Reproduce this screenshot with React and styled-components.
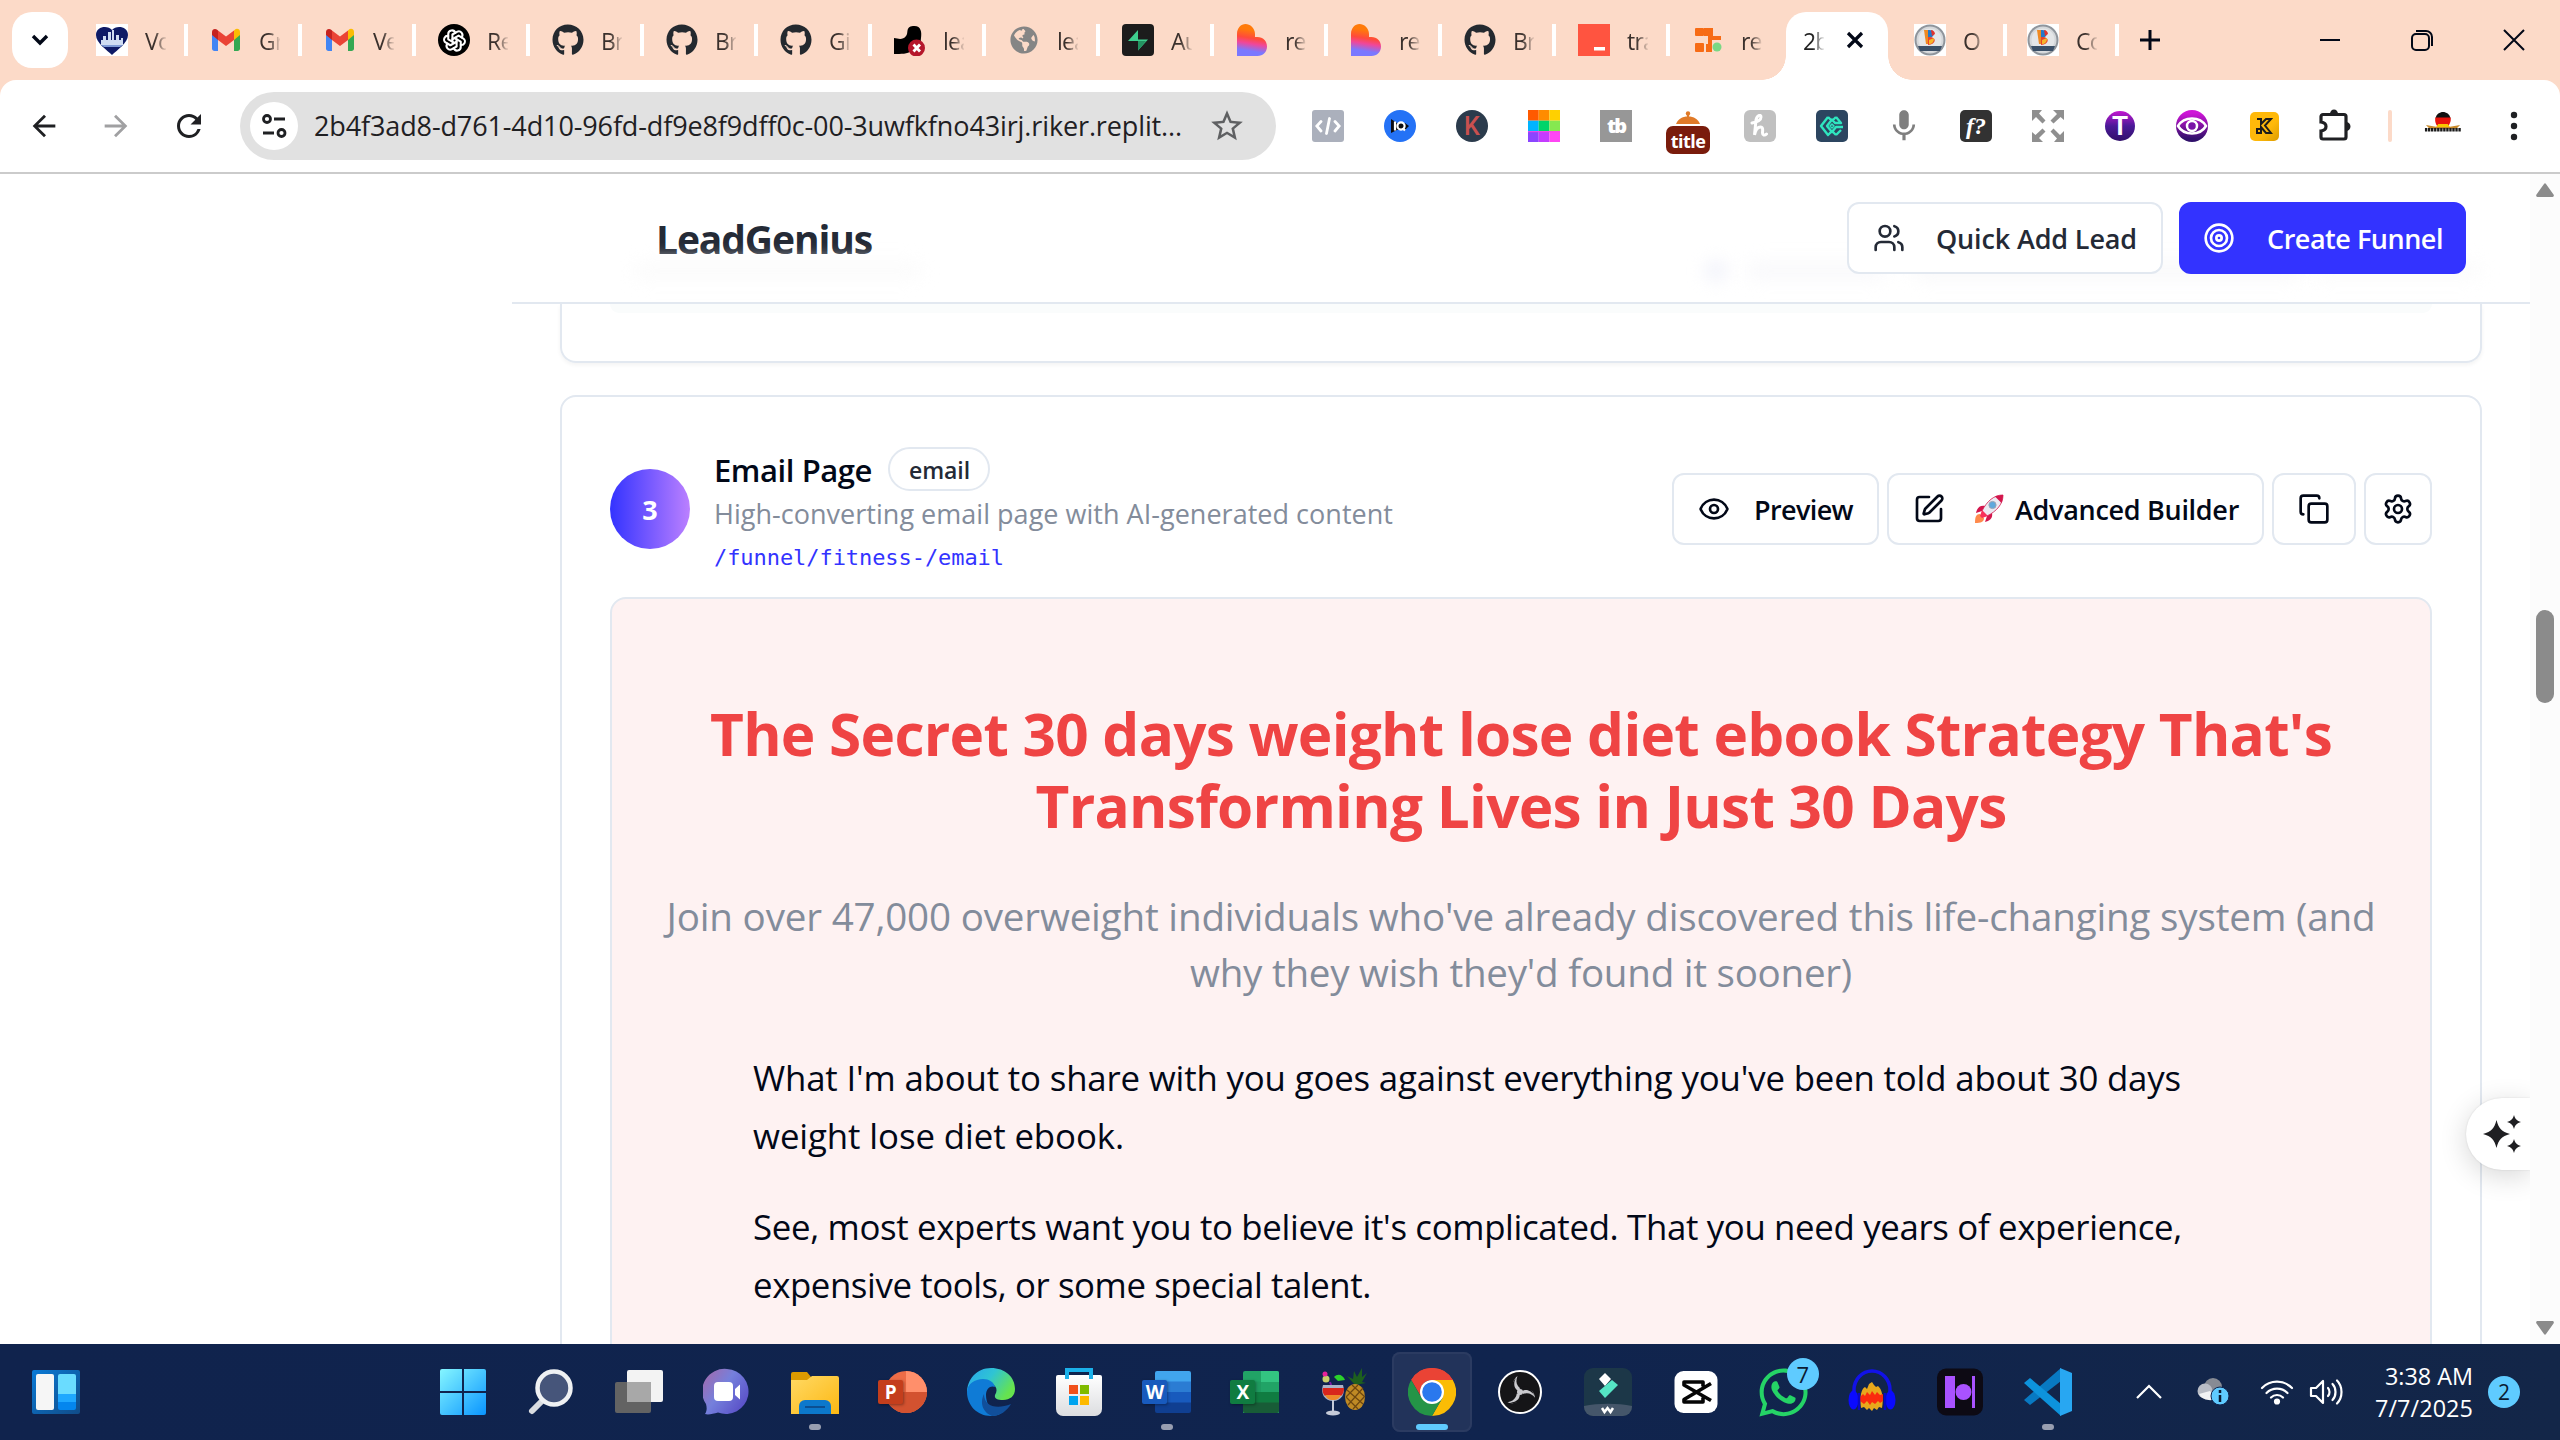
import React, { useLayoutEffect, useRef } from "react";
import styled, { createGlobalStyle, css } from "styled-components";
import { Users, Target, Eye, SquarePen, Copy, Settings } from "lucide-react";
import { FaGithub, FaWhatsapp, FaGlobeAmericas } from "react-icons/fa";
import { TbBrandOpenai } from "react-icons/tb";
import {
  MdArrowBack,
  MdArrowForward,
  MdRefresh,
  MdStarBorder,
  MdMic,
} from "react-icons/md";

const UI = `"Open Sans", "Noto Sans", sans-serif`;
const INK = "#020817";
const LINE = "#e2e8f0";
const PRIMARY = "#3333ff";

const Global = createGlobalStyle`
  *, *::before, *::after { box-sizing: border-box; }
  html, body { margin: 0; padding: 0; background: #fff; overflow: hidden; }
  body { font-family: ${UI}; color: ${INK}; }
  svg { display: block; flex: none; }
`;

/* ---------- text that tracks itself to a given measure ---------- */

const Measured = styled.span`
  display: block;
  width: max-content;
  white-space: nowrap;
`;

function Fit({ width, children }) {
  const ref = useRef(null);
  useLayoutEffect(() => {
    const el = ref.current;
    el.style.letterSpacing = "0px";
    const natural = el.getBoundingClientRect().width;
    el.style.letterSpacing = `${(width - natural) / children.length}px`;
  }, [width, children]);
  return <Measured ref={ref}>{children}</Measured>;
}

/* ---------- window frame ---------- */

const Screen = styled.div`
  width: 2560px;
  height: 1440px;
  display: flex;
  flex-direction: column;
  overflow: hidden;
  background: #fff;
`;

const TabStrip = styled.div`
  flex: none;
  height: 80px;
  display: flex;
  align-items: center;
  padding-left: 12px;
  background: #fcdac8;
`;

const TabSearch = styled.div`
  width: 56px;
  height: 56px;
  border-radius: 20px;
  background: #fff;
  display: flex;
  align-items: center;
  justify-content: center;
  margin-right: 6px;
`;

const Tab = styled.div`
  width: ${(p) => p.$w || 114}px;
  height: 32px;
  display: flex;
  align-items: center;
  padding-left: ${(p) => p.$pl || 22}px;
  border-right: ${(p) => (p.$bare ? "4px solid transparent" : "4px solid #fff")};
`;

const TabLabel = styled.div`
  width: 21px;
  margin-left: 17px;
  padding-top: 2px;
  overflow: hidden;
  white-space: nowrap;
  font-size: 23px;
  line-height: 32px;
  letter-spacing: -0.8px;
  color: #3a302c;
  mask-image: linear-gradient(90deg, #000 45%, transparent 105%);
`;

const ActiveTab = styled.div`
  width: 102px;
  margin: 0 3px 0 2px;
  height: 68px;
  align-self: flex-end;
  background: #fff;
  border-radius: 20px 20px 0 0;
  display: flex;
  align-items: center;
  padding: 0 0 12px 17px;
  position: relative;
  &::before,
  &::after {
    content: "";
    position: absolute;
    bottom: 0;
    width: 24px;
    height: 24px;
  }
  &::before {
    left: -24px;
    background: radial-gradient(circle at 0 0, transparent 23.5px, #fff 24px);
  }
  &::after {
    right: -24px;
    background: radial-gradient(circle at 100% 0, transparent 23.5px, #fff 24px);
  }
`;

const ActiveLabel = styled(TabLabel)`
  margin: 0 22px 0 0;
  color: #1f1f1f;
`;

const WindowControls = styled.div`
  margin-left: auto;
  display: flex;
  align-items: center;
  gap: 68px;
  padding-right: 34px;
`;

const NewTab = styled.div`
  margin-left: 20px;
`;

const ToolbarBack = styled.div`
  flex: none;
  background: #fcdac8;
`;

const Toolbar = styled.div`
  height: 94px;
  border-bottom: 2px solid #cbcbcb;
  border-radius: 16px 16px 0 0;
  background: #fff;
  display: flex;
  align-items: center;
  padding-left: 27px;
  color: #1f2023;
`;

const NavButtons = styled.div`
  display: flex;
  align-items: center;
  gap: 38px;
  width: 213px;
`;

const AddressBar = styled.div`
  width: 1036px;
  height: 68px;
  border-radius: 34px;
  background: #e1e1e1;
  display: flex;
  align-items: center;
  padding-left: 10px;
  color: #1f2023;
  font-size: 27px;
  line-height: 40px;
`;

const SiteInfo = styled.div`
  width: 48px;
  height: 48px;
  border-radius: 50%;
  background: #fff;
  display: grid;
  place-items: center;
  margin-right: 16px;
`;

const StarSlot = styled.div`
  margin-left: auto;
  margin-right: 30px;
  color: #5f6062;
`;

const Extensions = styled.div`
  display: flex;
  align-items: center;
  margin-left: 16px;
`;

const ExtSlot = styled.div`
  width: 72px;
  height: 72px;
  display: grid;
  place-items: center;
`;

const Tile = styled.div`
  width: ${(p) => p.$s || 32}px;
  height: ${(p) => p.$s || 32}px;
  border-radius: ${(p) => p.$r ?? 4}px;
  background: ${(p) => p.$bg};
  color: ${(p) => p.$fg || "#fff"};
  display: grid;
  place-items: center;
  font: ${(p) => p.$font || `700 20px/1 ${UI}`};
  letter-spacing: ${(p) => p.$track || 0}px;
`;

const JarBadge = styled.div`
  display: flex;
  flex-direction: column;
  align-items: center;
  padding-top: 13px;
`;

const JarLabel = styled.div`
  width: 44px;
  height: 28px;
  border-radius: 7px;
  background: #7a1c0c;
  color: #fff;
  font-weight: 700;
  font-size: 18px;
  line-height: 30px;
  text-align: center;
  letter-spacing: -0.5px;
`;

const ToolbarRule = styled.div`
  width: 4px;
  height: 32px;
  border-radius: 2px;
  background: #fcdac8;
  margin: 0 32px 0 16px;
`;

const MenuDots = styled.div`
  margin-left: 48px;
`;

/* ---------- page ---------- */

const Viewport = styled.div`
  flex: 1;
  min-height: 0;
  display: flex;
  overflow: hidden;
`;

const SideSpace = styled.div`
  width: 512px;
  flex: none;
`;

const Main = styled.div`
  width: 2018px;
  flex: none;
  display: flex;
  flex-direction: column;
  position: relative;
`;

const PageHeader = styled.header`
  flex: none;
  height: 130px;
  border-bottom: 2px solid ${LINE};
  display: flex;
  align-items: center;
  padding: 0 64px 0 144px;
  position: relative;
`;

const Haze = styled.div`
  position: absolute;
  left: ${(p) => p.$x}px;
  top: 86px;
  width: ${(p) => p.$w}px;
  height: 22px;
  border-radius: 11px;
  background: ${(p) => p.$c};
  filter: blur(8px);
`;

const Brand = styled.div`
  font-size: 39px;
  line-height: 56px;
  padding-top: 2px;
  font-weight: 700;
  color: #242a36;
  margin-right: auto;
`;

const Button = styled.div`
  height: 72px;
  width: ${(p) => p.$w}px;
  border-radius: 12px;
  border: 2px solid ${LINE};
  background: #fff;
  color: ${INK};
  display: flex;
  align-items: center;
  padding-left: ${(p) => p.$pl ?? 24}px;
  font-size: 27px;
  font-weight: 600;
  line-height: 40px;
  position: relative;
  ${(p) =>
    p.$primary &&
    css`
      background: ${PRIMARY};
      border-color: ${PRIMARY};
      color: #fff;
    `}
  ${(p) =>
    p.$muted &&
    css`
      color: #242a36;
    `}
`;

const ButtonText = styled.div`
  margin-left: ${(p) => p.$gap}px;
  padding-top: ${(p) => (p.$icon ? 0 : 2)}px;
`;

const HeaderActions = styled.div`
  display: flex;
  gap: 16px;
`;

const Content = styled.div`
  flex: 1;
  min-height: 0;
  padding: 0 48px;
  display: flex;
  flex-direction: column;
  gap: 32px;
  overflow: hidden;
`;

const PreviousCard = styled.section`
  flex: none;
  height: 59px;
  border: 2px solid ${LINE};
  border-top: 0;
  border-radius: 0 0 16px 16px;
  padding: 0 48px;
  box-shadow: 0 2px 4px rgba(0, 0, 0, 0.05);
`;

const PreviousPreview = styled.div`
  height: 9px;
  border-radius: 0 0 14px 14px;
  background: #fafcfc;
`;

const Card = styled.section`
  flex: none;
  height: 1000px;
  border: 2px solid ${LINE};
  border-radius: 16px;
  padding: 48px;
`;

const StepRow = styled.div`
  display: flex;
  align-items: center;
  height: 128px;
  margin-bottom: 24px;
`;

const StepNumber = styled.div`
  width: 80px;
  height: 80px;
  border-radius: 50%;
  background: linear-gradient(90deg, #3333ff, #bb80ff);
  color: #fff;
  font-size: 27px;
  font-weight: 700;
  display: grid;
  place-items: center;
  margin-right: 24px;
`;

const StepInfo = styled.div`
  display: flex;
  flex-direction: column;
`;

const TitleLine = styled.div`
  display: flex;
  align-items: center;
  gap: 16px;
  height: 48px;
  font-size: 31px;
  line-height: 46px;
  font-weight: 600;
`;

const Title = styled.div`
  padding-top: 2px;
`;

const Badge = styled.div`
  height: 44px;
  width: 102px;
  border: 2px solid ${LINE};
  border-radius: 22px;
  padding-left: 19px;
  font-size: 23px;
  line-height: 42px;
  color: #242a36;
`;

const Description = styled.div`
  padding-top: 1px;
  height: 40px;
  font-size: 27px;
  line-height: 40px;
  color: #838c9b;
`;

const Path = styled.div`
  margin-top: 8px;
  height: 32px;
  font-family: "DejaVu Sans Mono", monospace;
  font-size: 22px;
  line-height: 34px;
  color: ${PRIMARY};
`;

const StepActions = styled.div`
  margin-left: auto;
  display: flex;
  gap: 8px;
`;

const Preview = styled.div`
  height: 1000px;
  border: 2px solid ${LINE};
  border-radius: 16px;
  background: #fef2f2;
  padding-top: 98px;
  display: flex;
  flex-direction: column;
  align-items: center;
`;

const Headline = styled.h1`
  margin: 0 0 47px;
  font-size: 58.5px;
  line-height: 72px;
  font-weight: 700;
  color: #ef4444;
  display: flex;
  flex-direction: column;
  align-items: center;
`;

const Subhead = styled.p`
  margin: 0 0 49px;
  font-size: 38.6px;
  line-height: 56px;
  color: #838c9b;
  display: flex;
  flex-direction: column;
  align-items: center;
`;

const Copytext = styled.div`
  width: 1536px;
  display: flex;
  flex-direction: column;
  gap: 33px;
  font-size: 34.8px;
  line-height: 58px;
`;

const Paragraph = styled.p`
  margin: 0;
  display: flex;
  flex-direction: column;
  align-items: flex-start;
`;

const AssistTab = styled.div`
  position: absolute;
  right: 0;
  top: 924px;
  width: 64px;
  height: 72px;
  border-radius: 36px 0 0 36px;
  background: #fff;
  box-shadow: 0 6px 28px rgba(0, 0, 0, 0.16), 0 0 2px rgba(0, 0, 0, 0.12);
  clip-path: inset(-60px 0 -60px -60px);
  display: flex;
  align-items: center;
  padding-left: 16px;
`;

const Scrollbar = styled.div`
  width: 30px;
  background: #fcfcfc;
  display: flex;
  flex-direction: column;
  align-items: center;
  padding: 9px 0;
`;

const Thumb = styled.div`
  width: 18px;
  height: 93px;
  border-radius: 9px;
  background: #8b8b8b;
  margin: 413px 0 auto;
`;

/* ---------- taskbar ---------- */

const Taskbar = styled.div`
  flex: none;
  height: 96px;
  background: linear-gradient(90deg, #10234d, #10244e 60%, #132648);
  display: flex;
  align-items: center;
  color: #fff;
`;

const WidgetSlot = styled.div`
  width: 423px;
  padding-left: 32px;
`;

const AppSlot = styled.div`
  width: 80px;
  height: 80px;
  margin-right: 8.06px;
  border-radius: 8px;
  display: grid;
  place-items: center;
  position: relative;
  ${(p) =>
    p.$active &&
    css`
      background: #22335a;
      box-shadow: inset 0 0 0 2px #2b3b61;
    `}
`;

const Running = styled.div`
  position: absolute;
  bottom: 2px;
  left: 50%;
  transform: translateX(-50%);
  width: ${(p) => (p.$active ? 32 : 12)}px;
  height: 6px;
  border-radius: 3px;
  background: ${(p) => (p.$active ? "#5fcbff" : "#989eb0")};
`;

const UnreadBadge = styled.div`
  position: absolute;
  right: 5px;
  top: 6px;
  width: 32px;
  height: 32px;
  border-radius: 50%;
  background: #5fcbff;
  color: #0b1b33;
  font-size: 22px;
  line-height: 33px;
  text-align: center;
`;

const Tray = styled.div`
  margin-left: auto;
  display: flex;
  align-items: center;
  padding-right: 40px;
`;

const TrayGap = styled.div`
  width: ${(p) => p.$w}px;
`;

const Clock = styled.div`
  width: 110px;
  display: flex;
  flex-direction: column;
  align-items: flex-end;
  font-size: 23.4px;
  line-height: 32px;
  padding-bottom: 1px;
`;

const Notices = styled.div`
  width: 32px;
  height: 32px;
  margin-left: 15px;
  border-radius: 50%;
  background: #5fcbff;
  color: #0b1b33;
  font-size: 21px;
  line-height: 33px;
  text-align: center;
`;

/* ---------- favicons ---------- */

const HeartCity = () => (
  <svg width="32" height="32" viewBox="0 0 32 32">
    <rect width="32" height="32" fill="#fff" />
    <path d="M16 31C11 26 0 19 0 11 0 2 12 1 16 6c4-5 16-4 16 5 0 8-11 15-16 20z" fill="#0e1a66" />
    <path d="M5 21v-5h2v-4h3v4h2V8h3v8h1V6h2v10h2v-5h3v5h2v-2h2v7z" fill="#cfdcf2" />
    <path d="M5 21h22l-3 2H8z" fill="#7f9bd6" />
  </svg>
);

const Gmail = () => (
  <svg width="32" height="32" viewBox="0 0 32 32">
    <path d="M2 10v14.500c0 1.400 1 2.500 2.500 2.500H8V13z" fill="#4285f4" />
    <path d="M24 13v14h3.500c1.500 0 2.500-1.100 2.500-2.500V10z" fill="#34a853" />
    <path d="M8 6.500V16l8 6 8-6V6.500l-8 6z" fill="#ea4335" />
    <path d="M24 6.500V16l6-5V8c0-3-3.300-4.200-5.500-2z" fill="#fbbc04" />
    <path d="M2 8v3l6 5V6.500L7.500 6C5.300 4 2 5 2 8z" fill="#c5221f" />
  </svg>
);

const DarkLogo = () => (
  <svg width="32" height="32" viewBox="0 0 32 32">
    <path d="M0 14c5 1 9 2 12-2 3-3-1-9 7-10 8-1 9 6 8 12-1 5 2 8 2 14-4 2-8 2-12-1-3 3-10 3-17 3z" fill="#000" />
    <circle cx="22.500" cy="24" r="8.500" fill="#b5162b" />
    <path d="M19.500 20.500l6.500 7M26 20.500l-6.500 7" stroke="#fff" strokeWidth="2.800" />
  </svg>
);

const Supabase = () => (
  <svg width="32" height="32" viewBox="0 0 32 32">
    <rect width="32" height="32" rx="4" fill="#1c1c1c" />
    <path d="M16 6v9.500h10L16 26.500V17H6z" fill="#3ecf8e" />
    <path d="M16 17v9.500L24 17z" fill="#249361" />
  </svg>
);

const Lovable = ({ id }) => (
  <svg width="32" height="32" viewBox="0 0 32 32">
    <defs>
      <linearGradient id={id} x1="0.600" y1="0" x2="0.450" y2="1">
        <stop offset="0.200" stopColor="#ff7a0a" />
        <stop offset="0.450" stopColor="#ff4a3c" />
        <stop offset="0.620" stopColor="#f0479a" />
        <stop offset="0.850" stopColor="#7a78ff" />
      </linearGradient>
    </defs>
    <path
      d="M1 32V10C1 4 5 0 9.500 0S19 4 19 10v3h2.500c5.500 0 9.500 4 9.500 9.500S27 32 21.500 32z"
      fill={`url(#${id})`}
    />
  </svg>
);

const RedMark = () => (
  <svg width="32" height="32" viewBox="0 0 32 32">
    <rect width="32" height="32" fill="#ff5440" />
    <rect x="16" y="23" width="11" height="3.500" fill="#fff" />
  </svg>
);

const Blocks = () => (
  <svg width="32" height="32" viewBox="0 0 32 32">
    <g fill="#f76b15">
      <rect x="3" y="4" width="9" height="8" rx="1" />
      <path d="M12 4h9v8h8v4h-9v4h-4v-8h-4z" />
      <rect x="3" y="19" width="9" height="9" rx="1" />
      <path d="M14 20h6v8h-6z" />
    </g>
    <circle cx="25" cy="23" r="4.500" fill="#79d884" />
  </svg>
);

const Medal = () => (
  <svg width="32" height="32" viewBox="0 0 32 32">
    <rect width="32" height="32" fill="#fff" />
    <circle cx="16" cy="16" r="14.500" fill="#d4d7da" stroke="#8f959c" strokeWidth="2" />
    <circle cx="16" cy="16" r="11.500" fill="#e4e6e8" />
    <path d="M10 6h5v14h-3z" fill="#ef8a23" />
    <path d="M14 6c6-1 8 5 3 7.500L14 14z" fill="#2578c8" />
    <path d="M17 6c2 0 4 2 4 4l-3 2z" fill="#e0342f" />
    <path d="M14 13c9-1 9 7 0 8z" fill="#e8442a" />
    <path d="M15 16l5-2c0 4-2 6-5 6z" fill="#f6b52a" />
    <path d="M4 22h24l-2 5H6z" fill="#3b5068" />
  </svg>
);

const tabs = [
  { icon: <HeartCity />, label: "Vo" },
  { icon: <Gmail />, label: "Gr" },
  { icon: <Gmail />, label: "Ve" },
  {
    icon: (
      <Tile $bg="#000" $r={16}>
        <TbBrandOpenai size={25} />
      </Tile>
    ),
    label: "Re",
  },
  { icon: <FaGithub size={32} color="#24292f" />, label: "Br" },
  { icon: <FaGithub size={32} color="#24292f" />, label: "Br" },
  { icon: <FaGithub size={32} color="#24292f" />, label: "Gi" },
  { icon: <DarkLogo />, label: "lea" },
  {
    icon: (
      <Tile $bg="transparent">
        <FaGlobeAmericas size={28} color="#858585" />
      </Tile>
    ),
    label: "lea",
  },
  { icon: <Supabase />, label: "Au" },
  { icon: <Lovable id="lov1" />, label: "re" },
  { icon: <Lovable id="lov2" />, label: "re" },
  { icon: <FaGithub size={32} color="#24292f" />, label: "Br" },
  { icon: <RedMark />, label: "tra" },
  { icon: <Blocks />, label: "re", bare: true },
];

/* ---------- toolbar icons ---------- */

const Code = () => (
  <svg width="26" height="20" viewBox="0 0 26 20" fill="none" stroke="#fff" strokeWidth="2.800" strokeLinecap="round">
    <path d="M6 5.500L1.800 10 6 15M20 5.500l4.200 4.500-4.200 5M14.500 2.500l-3 15" />
  </svg>
);

const Quiz = () => (
  <svg width="20" height="18" viewBox="0 0 20 18">
    <path d="M1 2v14l6-3h8l4-4-4-3H7z" fill="#0d0d12" />
    <circle cx="11" cy="9" r="3.600" fill="none" stroke="#fff" strokeWidth="2.200" />
    <path d="M5 4.500v9M12.500 11l2.500 2.500" stroke="#fff" strokeWidth="2.200" />
  </svg>
);

const Rainbow = () => {
  const c = ["#ff5a00", "#ff8c00", "#ffd000", "#00b4ff", "#00d46a", "#86e850", "#8b46ff", "#c43cff", "#ff46f4"];
  return (
    <svg width="32" height="32" viewBox="0 0 32 32">
      {c.map((f, i) => (
        <rect key={i} x={(i % 3) * 10.67} y={Math.floor(i / 3) * 10.67} width="10.700" height="10.700" fill={f} />
      ))}
      <path d="M0 21.700h32" stroke="#ff3ce6" strokeWidth="1" />
    </svg>
  );
};

const Jar = () => (
  <JarBadge>
    <svg width="28" height="15" viewBox="0 0 28 15">
      <circle cx="14" cy="2.500" r="2.200" fill="#e07a28" />
      <path d="M2 13C4 8 8 5.500 14 5.500S24 8 26 13z" fill="#e07a28" />
      <path d="M14 3v4" stroke="#e07a28" strokeWidth="2" />
    </svg>
    <JarLabel>title</JarLabel>
  </JarBadge>
);

const Looped = () => (
  <svg width="22" height="24" viewBox="0 0 22 24" fill="none" stroke="#fff" strokeWidth="3" strokeLinecap="round">
    <path d="M3 9c5-1 9-3 9-6 0-3-4-2-5 3L5.500 21c1-5 3-8 6-8s2 4 2 6 2 3 4 1" />
  </svg>
);

const Diamond = () => (
  <svg width="26" height="26" viewBox="0 0 26 26" fill="none" stroke="#2fe6c0" strokeWidth="2.400" strokeLinejoin="round">
    <path d="M9 4L2 13l7 9 3-3M17 22l-3-3M9 4l3 3M17 4l-3 3M17 4l5 6h-6l-3-3.500L8 13l5 6 4-5h7M17 22l5-5" />
    <path d="M13 11l2 2-2 2-2-2z" strokeWidth="1.500" />
  </svg>
);

const Expand = () => (
  <svg width="32" height="32" viewBox="0 0 32 32" fill="#8f8f8f">
    {[0, 90, 180, 270].map((r) => (
      <path key={r} transform={`rotate(${r} 16 16)`} d="M0 0h10L7 3.500l6.500 7-3 3L4 7l-4 4z" />
    ))}
  </svg>
);

const PurpleEye = () => (
  <svg width="32" height="32" viewBox="0 0 32 32">
    <defs>
      <linearGradient id="pe" x1="0" y1="0" x2="0" y2="1">
        <stop offset="0.100" stopColor="#cf14d8" />
        <stop offset="0.900" stopColor="#30106a" />
      </linearGradient>
    </defs>
    <circle cx="16" cy="16" r="16" fill="url(#pe)" />
    <path d="M2 16C8 6 24 6 30 16 24 26 8 26 2 16z" fill="none" stroke="#fff" strokeWidth="2.500" />
    <circle cx="16" cy="16" r="5" fill="#7a12a8" stroke="#fff" strokeWidth="2.500" />
  </svg>
);

const KTile = () => (
  <svg width="18" height="18" viewBox="0 0 18 18" fill="none" stroke="#1c1c1c" strokeWidth="2">
    <path d="M2 2h4v5l5-5h5l-6 6.500 6 7.500h-5l-5-6v6H2v-4h4" />
  </svg>
);

const Puzzle = () => (
  <svg width="36" height="36" viewBox="0 0 36 36">
    <path
      d="M5 6.500h21a2 2 0 012 2V29a2 2 0 01-2 2H5a2 2 0 01-2-2v-6c3.500-.500 5-2.500 5-4.500s-1.500-4-5-4.500V8.500a2 2 0 012-2z"
      fill="none"
      stroke="#1f2023"
      strokeWidth="3.200"
    />
    <path d="M12 6a4 4.500 0 018 0zM28 14a4.500 4.500 0 010 9z" fill="#1f2023" />
  </svg>
);

const Avatar = () => (
  <svg width="38" height="32" viewBox="0 0 40 32">
    <path d="M12 8C14-1 26-1 28 8z" fill="#111" />
    <path d="M12 7h16c1 5-2 8-3 10H15c-2-2-4-5-3-10z" fill="#e8140c" />
    <path d="M15 14h10l3 4H12z" fill="#f7c600" />
    <path d="M2 15l12 2h12l12-2-4 4H6z" fill="#c98a2a" />
    <path d="M1 20h38" stroke="#1b1b1b" strokeWidth="3.600" strokeDasharray="2.500 0.700" />
  </svg>
);

const Tune = () => (
  <svg width="30" height="30" viewBox="0 0 30 30" fill="none" stroke="#1f2023" strokeWidth="2.800">
    <circle cx="8" cy="8" r="3.500" />
    <path d="M15 8h11M4 22h11" />
    <circle cx="22.500" cy="22" r="3.500" />
  </svg>
);

const extensions = [
  <Tile $bg="#abb0bc" $r={3}>
    <Code />
  </Tile>,
  <Tile $bg="#2472f6" $r={16}>
    <Quiz />
  </Tile>,
  <Tile $bg="#2b3b4c" $r={16} $fg="#c9504f" $font={`500 25px/1 "Roboto", sans-serif`}>K</Tile>,
  <Rainbow />,
  <Tile $bg="#979797" $r={0} $track={-2} $font={`800 20px/1 ${UI}`}>tb</Tile>,
  <Jar />,
  <Tile $bg="#c0c0c0" $r={6}>
    <Looped />
  </Tile>,
  <Tile $bg="#2c4560" $r={5}>
    <Diamond />
  </Tile>,
  <MdMic size={38} color="#7f7f7f" />,
  <Tile $bg="#323232" $r={5} $font={`italic 700 24px/1 "Liberation Serif", serif`}>f?</Tile>,
  <Expand />,
  <Tile $s={30} $bg="linear-gradient(#c416d0, #4a1a98 50%, #30106a)" $r={15} $font={`700 26px/1 "Roboto", sans-serif`}>
    T
  </Tile>,
  <PurpleEye />,
  <Tile $s={29} $bg="linear-gradient(135deg, #ffb90a 60%, #dd9c00)" $r={5}>
    <KTile />
  </Tile>,
  <Puzzle />,
];

/* ---------- page icons ---------- */

const Rocket = () => (
  <svg width="30" height="30" viewBox="0 0 30 30">
    <path d="M1 29c0-6 1-9 5-9l4 4c0 4-3 5-9 5z" fill="#ff8a4c" />
    <path d="M11 12c-5-1-8 2-9 7l6-2zM18 19c1 5-2 8-7 9l2-6z" fill="#d3164c" />
    <path d="M29 1c-9 0-16 6-21 16l5 5C23 17 29 10 29 1z" fill="#eceaf2" stroke="#d3164c" strokeWidth="0.800" />
    <path d="M29 1c-3 0-5 .500-8 1.500l6.500 6.500C28.500 6 29 4 29 1z" fill="#d3164c" />
    <circle cx="18.500" cy="11" r="3.600" fill="#5fa8dc" stroke="#9aa4b5" strokeWidth="1" />
    <path d="M8 16l6 6-6 2-2-2z" fill="#f8315a" />
  </svg>
);

const Sparkles = () => (
  <svg width="40" height="40" viewBox="0 0 40 40" fill="#1f1f22">
    <path d="M14.500 6c2.200 8.500 5 11.500 13.500 14-8.500 2.500-11.300 5.500-13.500 14C12.300 25.500 9.500 22.500 1 20c8.500-2.500 11.300-5.500 13.500-14z" />
    <path d="M32 1c1.300 4.200 2.700 5.700 7 7-4.300 1.300-5.700 2.800-7 7-1.300-4.200-2.700-5.700-7-7 4.300-1.300 5.700-2.800 7-7z" />
    <path d="M32 25c1.300 4.200 2.700 5.700 7 7-4.300 1.300-5.700 2.800-7 7-1.300-4.200-2.700-5.700-7-7 4.300-1.300 5.700-2.800 7-7z" />
  </svg>
);

const Arrow = ({ down }) => (
  <svg width="18" height="14" viewBox="0 0 18 14">
    <path
      d={down ? "M1.500 0h15c1.200 0 1.800 1.500 1 2.500L10 13c-.600.900-1.400.900-2 0L.500 2.500C-.300 1.500.300 0 1.500 0z" : "M1.500 14h15c1.200 0 1.800-1.500 1-2.500L10 1C9.400.100 8.600.100 8 1L.500 11.500c-.800 1-.200 2.500 1 2.500z"}
      fill="#8b8b8b"
    />
  </svg>
);

/* ---------- taskbar icons ---------- */

const Box = ({ children, s = 48 }) => (
  <svg width={s} height={s} viewBox="0 0 48 48">
    {children}
  </svg>
);

const Grad = ({ id, a, b, x2 = 1, y2 = 1 }) => (
  <linearGradient id={id} x1="0" y1="0" x2={x2} y2={y2}>
    <stop stopColor={a} />
    <stop offset="1" stopColor={b} />
  </linearGradient>
);

const Widgets = () => (
  <Box>
    <Grad id="wg" a="#0a7ad6" b="#114c88" />
    <rect y="2" width="48" height="44" rx="2" fill="url(#wg)" />
    <rect x="4" y="6" width="18" height="36" rx="2" fill="#f6f6f6" />
    <path d="M26 8a2 2 0 012-2h14a2 2 0 012 2v18H26z" fill="#6adcff" />
    <path d="M26 26h18v8H26z" fill="#1fa8ff" />
    <path d="M26 34h18v6a2 2 0 01-2 2H28a2 2 0 01-2-2z" fill="#0486ee" />
  </Box>
);

const Windows = () => (
  <Box>
    <linearGradient id="win" gradientUnits="userSpaceOnUse" x1="1" y1="1" x2="47" y2="47">
      <stop stopColor="#85f6ff" />
      <stop offset="1" stopColor="#0a95ff" />
    </linearGradient>
    <path d="M1 3a2 2 0 012-2h20v22H1zM25 1h20a2 2 0 012 2v20H25zM1 25h22v22H3a2 2 0 01-2-2zM25 25h22v20a2 2 0 01-2 2H25z" fill="url(#win)" />
  </Box>
);

const Search = () => (
  <Box>
    <path d="M14 34L5 43" stroke="#d9dce0" strokeWidth="6" strokeLinecap="round" />
    <circle cx="27" cy="20" r="16.500" fill="#46557a" stroke="#eff1f3" strokeWidth="4.500" />
  </Box>
);

const TaskView = () => (
  <Box>
    <rect x="12" y="2" width="36" height="32" rx="2" fill="#f3f3f3" />
    <rect x="0" y="14" width="36" height="31" rx="2" fill="#636363" />
    <path d="M12 14h24v20H12z" fill="#a8a8a8" />
  </Box>
);

const Chat = () => (
  <Box>
    <linearGradient id="chat2" x1="0" y1="0" x2="1" y2="0.700">
      <stop stopColor="#a867a6" />
      <stop offset="0.500" stopColor="#7580dc" />
      <stop offset="1" stopColor="#5a50c8" />
    </linearGradient>
    <path d="M24 1a22.500 22.500 0 11-9 43.500C10 46 5 47 2 46c2-3 2-6 1-10A22.500 22.500 0 0124 1z" fill="url(#chat2)" />
    <rect x="11" y="14" width="19" height="19" rx="4" fill="#fff" />
    <path d="M32 21l5-4.500v15L32 27z" fill="#fff" />
  </Box>
);

const Folder = () => (
  <Box>
    <Grad id="fold" a="#ffd964" b="#fdb813" />
    <path d="M0 6a2 2 0 012-2h14l4 5H46v6H0z" fill="#dd9a00" />
    <path d="M0 12h16l5-4h25a2 2 0 012 2v36H0z" fill="url(#fold)" />
    <path d="M8 46V38a6 6 0 016-6h20a6 6 0 016 6v8z" fill="#0c78cc" />
    <path d="M14 39h20" stroke="#0c4f92" strokeWidth="2" />
  </Box>
);

const OfficeTile = styled.div`
  position: absolute;
  left: 15px;
  top: 28px;
  width: 25px;
  height: 24px;
  border-radius: 2px;
  background: ${(p) => p.$c};
  color: #fff;
  font: 700 19px/24px "Open Sans", sans-serif;
  text-align: center;
  box-shadow: 1px 1px 3px rgba(0, 0, 0, 0.35);
`;

const PowerPoint = () => (
  <>
    <Box>
      <circle cx="27" cy="24" r="21" fill="#ed6c47" />
      <path d="M27 3a21 21 0 0121 21H27z" fill="#ff8f6b" />
      <path d="M48 24a21 21 0 01-42 0z" fill="#d35230" />
    </Box>
    <OfficeTile $c="#c43e1c">P</OfficeTile>
  </>
);

const Word = () => (
  <>
    <Box>
      <path d="M12 5a2 2 0 012-2h32a2 2 0 012 2v9H12z" fill="#41a5ee" />
      <path d="M12 13.500h36V24H12z" fill="#2b7cd3" />
      <path d="M12 24h36v11H12z" fill="#185abd" />
      <path d="M12 34.500h36V43a2 2 0 01-2 2H14a2 2 0 01-2-2z" fill="#103f91" />
    </Box>
    <OfficeTile $c="#185abd">W</OfficeTile>
  </>
);

const Excel = () => (
  <>
    <Box>
      <path d="M12 5a2 2 0 012-2h32a2 2 0 012 2v40H12z" fill="#21a366" />
      <path d="M30 3h16a2 2 0 012 2v9H30z" fill="#33c481" />
      <path d="M12 13.500h18V24H12z" fill="#1f9a60" />
      <path d="M12 24h36v11H12z" fill="#107c41" />
      <path d="M12 34.500h36V43a2 2 0 01-2 2H14a2 2 0 01-2-2z" fill="#185c37" />
    </Box>
    <OfficeTile $c="#107c41">X</OfficeTile>
  </>
);

const Edge = () => (
  <Box>
    <linearGradient id="ed1" x1="0" y1="0" x2="1" y2="0.500">
      <stop stopColor="#28a4ee" />
      <stop offset="0.500" stopColor="#2fc4d4" />
      <stop offset="1" stopColor="#66e34e" />
    </linearGradient>
    <path d="M24 0c14 0 24 9 24 21 0 7-5 11-12 11-5 0-9-1-8-5 4-6 0-12-8-12C10 15 1 21 0 25 0 11 10 0 24 0z" fill="url(#ed1)" />
    <path d="M0 24c0-8 8-13 16-13 6 0 11 3 12 8-4-2-9 1-9 8 0 9 5 19 17 17-4 3-8 4-12 4C10 48 0 37 0 24z" fill="#0f7bd6" />
    <path d="M17 26c0 12 12 16 27 10-4 7-11 12-19 12-8-3-13-12-8-22z" fill="#114f9b" />
  </Box>
);

const Store = () => (
  <Box>
    <Grad id="st" a="#ffffff" b="#dcdde0" x2={0} />
    <path d="M1 9a2 2 0 012-2h42a2 2 0 012 2v32a7 7 0 01-7 7H8a7 7 0 01-7-7z" fill="url(#st)" />
    <path d="M12 11V2h24v9" fill="none" stroke="#1bb1ea" strokeWidth="4" />
    <path d="M14 17h9v9h-9z" fill="#f1511b" />
    <path d="M25 17h9v9h-9z" fill="#80bb00" />
    <path d="M14 28h9v9h-9z" fill="#00a4ef" />
    <path d="M25 28h9v9h-9z" fill="#fdb900" />
  </Box>
);

const Cocktail = () => (
  <Box>
    <path d="M36 17l-8-9 6 3 1-8 3 6 5-9 0 9 5-4-5 9 4 1z" fill="#1d5f1e" />
    <ellipse cx="36" cy="29" rx="10" ry="13" fill="#bf8a24" />
    <path d="M28 22l16 14M27 29l12 12M33 17l13 12M44 20L29 37M46 28L34 41M39 17L27 29" stroke="#6d4710" strokeWidth="1.200" />
    <path d="M11 14l5 14" stroke="#7a1aa8" strokeWidth="2" />
    <path d="M4 17c-3 9 2 16 10 16s13-7 10-16z" fill="#a8b2c8" />
    <path d="M4 20h21c0 4-1 6-3 8H6c-2-2-3-5-2-8z" fill="#d8261c" />
    <path d="M6 27h16c-2 4-4 5-8 5s-6-1-8-5z" fill="#ee8a2a" />
    <path d="M14 32v12" stroke="#c6cbd8" strokeWidth="2" />
    <ellipse cx="14" cy="45" rx="7" ry="2.500" fill="#c6cbd8" />
    <path d="M15 9c4-4 9-2 11 3l-7 1z" fill="#2bd02b" />
    <circle cx="7" cy="11" r="3.500" fill="#c8cf6a" />
    <circle cx="6" cy="6" r="2.500" fill="#e8209a" />
  </Box>
);

const Chrome = () => (
  <Box>
    <path d="M3.200 12A24 24 0 0144.800 12H24z" fill="#ea4335" />
    <path d="M44.800 12A24 24 0 0124 48l10.400-18L24 12z" fill="#fbbc05" />
    <path d="M3.200 12A24 24 0 0144.800 12H24a12 12 0 00-10.400 6l-.400 11z" fill="#ea4335" />
    <path d="M3.200 12A24 24 0 0024 48l10.400-18H13.600z" fill="#249447" />
    <circle cx="24" cy="24" r="12" fill="#fff" />
    <circle cx="24" cy="24" r="9.800" fill="#2a78ee" />
  </Box>
);

const Obs = () => (
  <Box>
    <circle cx="24" cy="24" r="21" fill="#151517" stroke="#fff" strokeWidth="2" />
    {[0, 120, 240].map((r) => (
      <path
        key={r}
        transform={`rotate(${r} 24 24)`}
        d="M25 26c-6-1-9-5-8-11 .500-3 2-5 4.500-7-1.500 4-1.500 7 .500 10 1.300 2 3 3 5 3.500z"
        fill="#c9c9cd"
      />
    ))}
    {[0, 120, 240].map((r) => (
      <path
        key={r}
        transform={`rotate(${r} 24 24)`}
        d="M23.500 23.500c-4-2-5.500-4.500-5.200-8.500.200-2 .800-3.500 1.700-5-3 3-5.500 8-3.500 12 1 2 3 3.500 5 4z"
        fill="#151517"
      />
    ))}
    <circle cx="24" cy="24" r="3" fill="#c9c9cd" />
  </Box>
);

const Filmora = () => (
  <Box>
    <rect width="48" height="48" rx="9" fill="#1c3748" />
    <path d="M0 38c14-3 34-3 48 0v1a9 9 0 01-9 9H9a9 9 0 01-9-9z" fill="#45566a" />
    <path d="M15 11l6-6 6 6-6 7z" fill="#fff" />
    <path d="M15 23l13-11 6 5-13 13z" fill="#55e5c5" />
    <path d="M18 40l2.500 4 3-4 3 4 2.500-4" fill="none" stroke="#fff" strokeWidth="2.500" />
  </Box>
);

const CapCut = () => (
  <Box>
    <rect x="2.500" y="3" width="43" height="42" rx="9" fill="#fff" />
    <path
      d="M39 15.500L12 31.500v2.500h19v-4.500M39 32.500L12 17v-3h19v4.500"
      fill="none"
      stroke="#050505"
      strokeWidth="3.600"
      strokeLinejoin="round"
    />
  </Box>
);

const Audacity = () => (
  <Box>
    <path d="M6 34V22a18 19 0 0136 0v12" fill="none" stroke="#1212e8" strokeWidth="3.500" />
    <path d="M13 40c-2-12 1-20 4-21l2 2 2-5 3-2 2 3 2 2 2-1c4 3 6 12 4 22l-3-1-2 3-3-2-2 3-3-3-2 2-3-3z" fill="#e8a81c" />
    <path d="M12 29l3-3 2 2 2-4 3 3 2-4 3 4 2-3 3 3 3-1v7l-3 2-2-2-3 3-3-2-2 3-3-4-3 3-4-3z" fill="#fb2a0e" />
    <ellipse cx="5.500" cy="32" rx="5" ry="9.500" fill="#0a0aff" />
    <ellipse cx="42.500" cy="32" rx="5" ry="9.500" fill="#0a0aff" />
    <path d="M11 25v17M37 25v17" stroke="#0808c8" strokeWidth="2.500" />
  </Box>
);

const Hitfilm = () => (
  <Box>
    <rect x="1" y="0.500" width="46" height="47" rx="9" fill="#0d0a14" />
    <path d="M9 8h10v32H9zM36 8h3v32h-3z" fill="#a952ff" />
    <circle cx="27.500" cy="24" r="8" fill="#a952ff" />
  </Box>
);

const VsCode = () => (
  <Box>
    <path d="M0 32l6 5L37 13V0z" fill="#0879c2" />
    <path d="M0 15l6-5 31 26v12z" fill="#0d93dc" />
    <path d="M36 0l12 5v38l-12 5z" fill="#28a7f2" />
  </Box>
);

const apps = [
  { art: <Windows /> },
  { art: <Search /> },
  { art: <TaskView /> },
  { art: <Chat /> },
  { art: <Folder />, running: true },
  { art: <PowerPoint /> },
  { art: <Edge /> },
  { art: <Store /> },
  { art: <Word />, running: true },
  { art: <Excel /> },
  { art: <Cocktail /> },
  { art: <Chrome />, running: true, active: true },
  { art: <Obs /> },
  { art: <Filmora /> },
  { art: <CapCut /> },
  { art: <FaWhatsapp size={55} color="#25d366" />, unread: "7" },
  { art: <Audacity /> },
  { art: <Hitfilm /> },
  { art: <VsCode />, running: true },
];

const Line = ({ w, h, d, sw = 2 }) => (
  <svg width={w} height={h} viewBox={`0 0 ${w} ${h}`} fill="none" stroke="currentColor" strokeWidth={sw}>
    <path d={d} />
  </svg>
);

const Cloud = () => (
  <svg width="34" height="40" viewBox="0 0 34 40">
    <circle cx="17" cy="15" r="9" fill="#878b94" />
    <circle cx="9" cy="19" r="7.500" fill="#b9bdc6" />
    <path d="M3 22c4 7 12 7 18 5l-7-8z" fill="#f1f2f4" />
    <circle cx="24" cy="24" r="9" fill="#5fcbff" stroke="#10244e" strokeWidth="1" />
    <path d="M24 18v3M24 23v7" stroke="#0b1b33" strokeWidth="2.500" />
  </svg>
);

const Wifi = () => (
  <svg width="34" height="26" viewBox="0 0 34 26" fill="none" stroke="#fff" strokeWidth="2.200" strokeLinecap="round">
    <path d="M2 9a21 21 0 0130 0M6.500 14a15 15 0 0121 0M11 18.500a8.500 8.500 0 0112 0" />
    <circle cx="17" cy="22.500" r="2" fill="#fff" />
  </svg>
);

const Volume = () => (
  <svg width="34" height="30" viewBox="0 0 34 30" fill="none" stroke="#fff" strokeWidth="2.200" strokeLinecap="round" strokeLinejoin="round">
    <path d="M2 11h5l7-7v22l-7-7H2zM19 11c2 2 2 6 0 8M23.500 7c4 4 4 12 0 16M28 3.500c6 6 6 17 0 23" />
  </svg>
);

/* ---------- app ---------- */

export default function App() {
  return (
    <Screen>
      <Global />
      <TabStrip>
        <TabSearch>
          <Line w={18} h={14} sw={3.4} d="M2 3l7 7 7-7" />
        </TabSearch>
        {tabs.map((t, i) => (
          <Tab key={i} $bare={t.bare}>
            {t.icon}
            <TabLabel>{t.label}</TabLabel>
          </Tab>
        ))}
        <ActiveTab>
          <ActiveLabel>2b4</ActiveLabel>
          <Line w={18} h={18} sw={3.2} d="M2 2l14 14M16 2L2 16" />
        </ActiveTab>
        <Tab $w={116} $pl={23}>
          <Medal />
          <TabLabel>O</TabLabel>
        </Tab>
        <Tab $w={112} $pl={20}>
          <Medal />
          <TabLabel>Co</TabLabel>
        </Tab>
        <NewTab>
          <Line w={22} h={22} sw={3} d="M11 1v20M1 11h20" />
        </NewTab>
        <WindowControls>
          <Line w={24} h={24} sw={2} d="M2 12h20" />
          <Line w={24} h={24} sw={2} d="M2 10a4 4 0 014-4h9a4 4 0 014 4v8a4 4 0 01-4 4H6a4 4 0 01-4-4zM6 3h10a6 6 0 016 6v9" />
          <Line w={24} h={24} sw={2} d="M2 2l20 20M22 2L2 22" />
        </WindowControls>
      </TabStrip>
      <ToolbarBack>
        <Toolbar>
          <NavButtons>
            <MdArrowBack size={34} />
            <MdArrowForward size={34} color="#a0a0a2" />
            <MdRefresh size={36} />
          </NavButtons>
          <AddressBar>
            <SiteInfo>
              <Tune />
            </SiteInfo>
            <Fit width={868}>2b4f3ad8-d761-4d10-96fd-df9e8f9dff0c-00-3uwfkfno43irj.riker.replit...</Fit>
            <StarSlot>
              <MdStarBorder size={38} />
            </StarSlot>
          </AddressBar>
          <Extensions>
            {extensions.map((e, i) => (
              <ExtSlot key={i}>{e}</ExtSlot>
            ))}
          </Extensions>
          <ToolbarRule />
          <Avatar />
          <MenuDots>
            <svg width="8" height="32" viewBox="0 0 8 32" fill="#1f2023">
              <circle cx="4" cy="5" r="3.200" />
              <circle cx="4" cy="16" r="3.200" />
              <circle cx="4" cy="27" r="3.200" />
            </svg>
          </MenuDots>
        </Toolbar>
      </ToolbarBack>

      <Viewport>
        <SideSpace />
        <Main>
          <PageHeader>
            <Haze $x={120} $w={290} $c="#fcfcfc" />
            <Haze $x={1192} $w={24} $c="#f3f4fb" />
            <Haze $x={1234} $w={140} $c="#fafafc" />
            <Haze $x={1400} $w={390} $c="#fafafb" />
            <Haze $x={1800} $w={170} $c="#fcfcfc" />
            <Brand>
              <Fit width={216}>LeadGenius</Fit>
            </Brand>
            <HeaderActions>
              <Button $w={316} $muted>
                <Users size={32} strokeWidth={2} />
                <ButtonText $gap={31}>
                  <Fit width={201}>Quick Add Lead</Fit>
                </ButtonText>
              </Button>
              <Button $w={287} $primary $pl={22}>
                <Target size={32} strokeWidth={2} />
                <ButtonText $gap={32}>
                  <Fit width={176}>Create Funnel</Fit>
                </ButtonText>
              </Button>
            </HeaderActions>
          </PageHeader>
          <Content>
            <PreviousCard>
              <PreviousPreview />
            </PreviousCard>
            <Card>
              <StepRow>
                <StepNumber>3</StepNumber>
                <StepInfo>
                  <TitleLine>
                    <Title>
                      <Fit width={158}>Email Page</Fit>
                    </Title>
                    <Badge>
                      <Fit width={61}>email</Fit>
                    </Badge>
                  </TitleLine>
                  <Description>
                    <Fit width={679}>High-converting email page with AI-generated content</Fit>
                  </Description>
                  <Path>
                    <Fit width={290}>/funnel/fitness-/email</Fit>
                  </Path>
                </StepInfo>
                <StepActions>
                  <Button $w={207}>
                    <Eye size={32} strokeWidth={2} />
                    <ButtonText $gap={24}>
                      <Fit width={99}>Preview</Fit>
                    </ButtonText>
                  </Button>
                  <Button $w={377}>
                    <SquarePen size={32} strokeWidth={2} />
                    <ButtonText $gap={29} $icon>
                      <Rocket />
                    </ButtonText>
                    <ButtonText $gap={11}>
                      <Fit width={224}>Advanced Builder</Fit>
                    </ButtonText>
                  </Button>
                  <Button $w={84}>
                    <Copy size={32} strokeWidth={2} />
                  </Button>
                  <Button $w={68} $pl={16}>
                    <Settings size={32} strokeWidth={2} />
                  </Button>
                </StepActions>
              </StepRow>
              <Preview>
                <Headline>
                  <Fit width={1622}>The Secret 30 days weight lose diet ebook Strategy That's</Fit>
                  <Fit width={971}>Transforming Lives in Just 30 Days</Fit>
                </Headline>
                <Subhead>
                  <Fit width={1709}>
                    Join over 47,000 overweight individuals who've already discovered this life-changing system (and
                  </Fit>
                  <Fit width={662}>why they wish they'd found it sooner)</Fit>
                </Subhead>
                <Copytext>
                  <Paragraph>
                    <Fit width={1428}>What I'm about to share with you goes against everything you've been told about 30 days</Fit>
                    <Fit width={371}>weight lose diet ebook.</Fit>
                  </Paragraph>
                  <Paragraph>
                    <Fit width={1429}>See, most experts want you to believe it's complicated. That you need years of experience,</Fit>
                    <Fit width={618}>expensive tools, or some special talent.</Fit>
                  </Paragraph>
                </Copytext>
              </Preview>
            </Card>
          </Content>
          <AssistTab>
            <Sparkles />
          </AssistTab>
        </Main>
        <Scrollbar>
          <Arrow />
          <Thumb />
          <Arrow down />
        </Scrollbar>
      </Viewport>

      <Taskbar>
        <WidgetSlot>
          <Widgets />
        </WidgetSlot>
        {apps.map((a, i) => (
          <AppSlot key={i} $active={a.active}>
            {a.art}
            {a.running && <Running $active={a.active} />}
            {a.unread && <UnreadBadge>{a.unread}</UnreadBadge>}
          </AppSlot>
        ))}
        <Tray>
          <Line w={28} h={16} sw={2.2} d="M2 14L14 2l12 12" />
          <TrayGap $w={33} />
          <Cloud />
          <TrayGap $w={30} />
          <Wifi />
          <TrayGap $w={15} />
          <Volume />
          <TrayGap $w={20} />
          <Clock>
            <Fit width={88}>3:38 AM</Fit>
            <Fit width={98}>7/7/2025</Fit>
          </Clock>
          <Notices>2</Notices>
        </Tray>
      </Taskbar>
    </Screen>
  );
}
